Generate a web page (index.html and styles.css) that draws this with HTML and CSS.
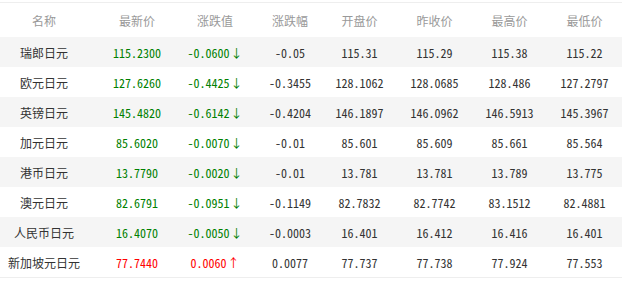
FILE: index.html
```html
<!DOCTYPE html>
<html lang="zh-CN">
  <head>
    <meta charset="UTF-8" />
    <meta name="viewport" content="width=device-width, initial-scale=1.0" />
    <title>日元汇率</title>
    <link rel="stylesheet" href="styles.css">
  </head>
  <body>
    <table class="rates">
      <colgroup>
        <col class="c-name" />
        <col class="c-last" />
        <col class="c-chg" />
        <col class="c-pct" />
        <col class="c-num" />
        <col class="c-num" />
        <col class="c-num" />
        <col class="c-num" />
      </colgroup>
      <thead>
        <tr>
          <th>名称</th>
          <th>最新价</th>
          <th class="chg">涨跌值</th>
          <th class="pct">涨跌幅</th>
          <th>开盘价</th>
          <th>昨收价</th>
          <th>最高价</th>
          <th>最低价</th>
        </tr>
      </thead>
      <tbody>
        <tr>
          <td class="name">瑞郎日元</td>
          <td class="num down">115.2300</td>
          <td class="num chg down">-0.0600<span class="arrow">↓</span></td>
          <td class="num pct">-0.05</td>
          <td class="num">115.31</td>
          <td class="num">115.29</td>
          <td class="num">115.38</td>
          <td class="num">115.22</td>
        </tr>
        <tr>
          <td class="name">欧元日元</td>
          <td class="num down">127.6260</td>
          <td class="num chg down">-0.4425<span class="arrow">↓</span></td>
          <td class="num pct">-0.3455</td>
          <td class="num">128.1062</td>
          <td class="num">128.0685</td>
          <td class="num">128.486</td>
          <td class="num">127.2797</td>
        </tr>
        <tr>
          <td class="name">英镑日元</td>
          <td class="num down">145.4820</td>
          <td class="num chg down">-0.6142<span class="arrow">↓</span></td>
          <td class="num pct">-0.4204</td>
          <td class="num">146.1897</td>
          <td class="num">146.0962</td>
          <td class="num">146.5913</td>
          <td class="num">145.3967</td>
        </tr>
        <tr>
          <td class="name">加元日元</td>
          <td class="num down">85.6020</td>
          <td class="num chg down">-0.0070<span class="arrow">↓</span></td>
          <td class="num pct">-0.01</td>
          <td class="num">85.601</td>
          <td class="num">85.609</td>
          <td class="num">85.661</td>
          <td class="num">85.564</td>
        </tr>
        <tr>
          <td class="name">港币日元</td>
          <td class="num down">13.7790</td>
          <td class="num chg down">-0.0020<span class="arrow">↓</span></td>
          <td class="num pct">-0.01</td>
          <td class="num">13.781</td>
          <td class="num">13.781</td>
          <td class="num">13.789</td>
          <td class="num">13.775</td>
        </tr>
        <tr>
          <td class="name">澳元日元</td>
          <td class="num down">82.6791</td>
          <td class="num chg down">-0.0951<span class="arrow">↓</span></td>
          <td class="num pct">-0.1149</td>
          <td class="num">82.7832</td>
          <td class="num">82.7742</td>
          <td class="num">83.1512</td>
          <td class="num">82.4881</td>
        </tr>
        <tr>
          <td class="name">人民币日元</td>
          <td class="num down">16.4070</td>
          <td class="num chg down">-0.0050<span class="arrow">↓</span></td>
          <td class="num pct">-0.0003</td>
          <td class="num">16.401</td>
          <td class="num">16.412</td>
          <td class="num">16.416</td>
          <td class="num">16.401</td>
        </tr>
        <tr>
          <td class="name">新加坡元日元</td>
          <td class="num up">77.7440</td>
          <td class="num chg up">0.0060<span class="arrow">↑</span></td>
          <td class="num pct">0.0077</td>
          <td class="num">77.737</td>
          <td class="num">77.738</td>
          <td class="num">77.924</td>
          <td class="num">77.553</td>
        </tr>
      </tbody>
    </table>
  </body>
</html>
```

FILE: styles.css
```css
* {
  --text-color: #333;
  --head-color: #999;
  --line-color: #eee;
  --stripe-color: #f5f5f5;
  --down-color: #008000;
  --up-color: #ff0000;
}
body {
  margin: 0;
  padding-top: 2px;
  background: #fff;
  font-family: "Noto Sans CJK SC", "Noto Sans", sans-serif;
  color: var(--text-color);
}
.rates {
  width: 622px;
  table-layout: fixed;
  border-collapse: collapse;
  border-top: 1px solid var(--line-color);
  border-bottom: 1px solid var(--line-color);
}
.c-name {
  width: 88px;
}
.c-last {
  width: 98px;
}
.c-chg {
  width: 66px;
}
.c-pct {
  width: 70px;
}
.c-num {
  width: 75px;
}
.rates th,
.rates td {
  padding: 0;
  text-align: center;
  white-space: nowrap;
}
.rates th {
  height: 34px;
  font-size: 12px;
  font-weight: normal;
  color: var(--head-color);
}
.rates td {
  height: 30px;
}
.rates tbody tr:nth-child(odd) {
  background-color: var(--stripe-color);
}
.rates .chg {
  padding-right: 8px;
}
.rates .pct {
  padding-left: 6px;
}
.name {
  font-size: 12px;
}
.num {
  font-family: "Noto Sans Mono CJK SC", "Liberation Mono", monospace;
  font-size: 12px;
}
.down {
  color: var(--down-color);
}
.up {
  color: var(--up-color);
}
.arrow {
  font-family: "Noto Sans CJK SC", sans-serif;
  margin-left: 1px;
}
```
